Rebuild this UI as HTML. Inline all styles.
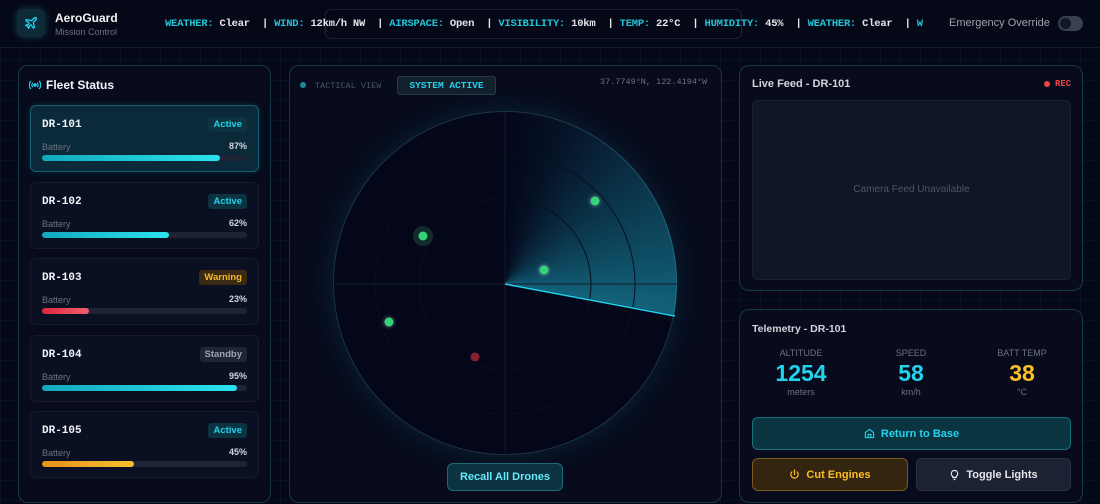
<!DOCTYPE html>
<html><head><style>
*{box-sizing:border-box;margin:0;padding:0}
body{width:1100px;height:504px;overflow:hidden;background:#050816;font-family:"Liberation Sans",sans-serif;color:#e5e7eb;position:relative;
background-image:linear-gradient(rgba(30,60,80,.18) 1px,transparent 1px),linear-gradient(90deg,rgba(30,60,80,.18) 1px,transparent 1px);background-size:20px 20px}
.abs{position:absolute}
.mono{font-family:"Liberation Mono",monospace}
.panel{position:absolute;background:#070b1c;border:1px solid #12394a;border-radius:10px}
.card{position:absolute;left:30px;width:229px;height:67px;border-radius:6px;background:#0b0f22;border:1px solid #161b2e}
.card .id{position:absolute;left:11px;top:13px;font-family:"Liberation Mono",monospace;font-weight:bold;font-size:11px;color:#f1f5f9}
.card .bd{position:absolute;right:11px;top:11px;font-size:9.5px;padding:2px 5px;border-radius:3px;font-weight:bold}
.card .bl{position:absolute;left:11px;top:36px;font-size:9px;color:#6b7280}
.card .pc{position:absolute;right:11px;top:35px;font-size:9px;color:#d1d5db;font-weight:bold}
.card .tr{position:absolute;left:11px;right:11px;top:49px;height:6px;border-radius:3px;background:#1e2335}
.card .fl{height:6px;border-radius:3px}
.act{background:#0d3340;color:#22d3ee}
.cy{background:linear-gradient(90deg,#12a8bd,#2be3ef)}
.stat{position:absolute;text-align:center;width:100px}
.stat .l{font-size:9px;color:#6b7280}
.stat .v{font-size:23px;font-weight:bold;margin-top:2px}
.stat .u{font-size:9px;color:#6b7280}
.btn{position:absolute;border-radius:6px;font-size:11px;font-weight:bold;display:flex;align-items:center;justify-content:center;gap:6px}
</style></head><body>
<!-- header -->
<div class="abs" style="left:0;top:0;width:1100px;height:48px;background:#050816;border-bottom:1px solid #0f1e2c"></div>
<div class="abs" style="left:17px;top:9px;width:28px;height:28px;border-radius:6px;background:#0d2a38;box-shadow:0 0 8px #0e3b4c"></div>
<svg class="abs" style="left:24px;top:16px" width="14" height="14" viewBox="0 0 24 24" fill="none" stroke="#22d3ee" stroke-width="2.2" stroke-linecap="round"><path d="M17.8 19.2 16 11l3.5-3.5C21 6 21.5 4 21 3c-1-.5-3 0-4.5 1.5L13 8 4.8 6.2c-.5-.1-.9.1-1.1.5l-.3.5c-.2.5-.1 1 .3 1.3L9 12l-2 3H4l-1 1 3 2 2 3 1-1v-3l3-2 3.5 5.3c.3.4.8.5 1.3.3l.5-.2c.4-.3.6-.7.5-1.2z"/></svg>
<div class="abs" style="left:55px;top:11px;font-size:12px;font-weight:bold;color:#f3f4f6">AeroGuard</div>
<div class="abs" style="left:55px;top:27px;font-size:9px;color:#6b7280">Mission Control</div>
<div class="abs" style="left:325px;top:9px;width:417px;height:30px;border:1px solid #1a2233;border-radius:6px"></div>
<div class="abs mono" style="left:165px;top:18px;font-size:10.5px;letter-spacing:-0.24px;white-space:nowrap;font-weight:bold;color:#e5e7eb;width:762px;overflow:hidden"><span style="color:#22c3d6">WEATHER:</span> Clear &nbsp;| <span style="color:#22c3d6">WIND:</span> 12km/h NW &nbsp;| <span style="color:#22c3d6">AIRSPACE:</span> Open &nbsp;| <span style="color:#22c3d6">VISIBILITY:</span> 10km &nbsp;| <span style="color:#22c3d6">TEMP:</span> 22°C &nbsp;| <span style="color:#22c3d6">HUMIDITY:</span> 45% &nbsp;| <span style="color:#22c3d6">WEATHER:</span> Clear &nbsp;| <span style="color:#22c3d6">W</span></div>
<div class="abs" style="left:949px;top:17px;font-size:11px;color:#9ca3af">Emergency Override</div>
<div class="abs" style="left:1058px;top:16px;width:25px;height:15px;border-radius:8px;background:#374151"><div style="position:absolute;left:2px;top:2px;width:11px;height:11px;border-radius:50%;background:#111827"></div></div>

<!-- left panel -->
<div class="panel" style="left:18px;top:65px;width:253px;height:438px"></div>
<svg class="abs" style="left:29px;top:80px" width="12" height="10" viewBox="0 0 12 10" fill="none" stroke="#22d3ee" stroke-width="1.2"><circle cx="6" cy="5" r="1.2" fill="#22d3ee"/><path d="M3.8 2.8a3 3 0 0 0 0 4.4M8.2 2.8a3 3 0 0 1 0 4.4M2 1a5.5 5.5 0 0 0 0 8M10 1a5.5 5.5 0 0 1 0 8"/></svg>
<div class="abs" style="left:46px;top:78px;font-size:12px;font-weight:bold;color:#f3f4f6">Fleet Status</div>

<div class="card" style="top:105px;background:#0a2a3a;border-color:#156070;box-shadow:0 0 8px rgba(34,211,238,.15)"><div class="id">DR-101</div><div class="bd act">Active</div><div class="bl">Battery</div><div class="pc">87%</div><div class="tr"><div class="fl cy" style="width:87%"></div></div></div>
<div class="card" style="top:182px"><div class="id">DR-102</div><div class="bd act">Active</div><div class="bl">Battery</div><div class="pc">62%</div><div class="tr"><div class="fl cy" style="width:62%"></div></div></div>
<div class="card" style="top:258px"><div class="id">DR-103</div><div class="bd" style="background:#3a2a14;color:#f5b82a">Warning</div><div class="bl">Battery</div><div class="pc">23%</div><div class="tr"><div class="fl" style="width:23%;background:linear-gradient(90deg,#dc2640,#f0606c)"></div></div></div>
<div class="card" style="top:335px"><div class="id">DR-104</div><div class="bd" style="background:#1f2535;color:#9ca3af">Standby</div><div class="bl">Battery</div><div class="pc">95%</div><div class="tr"><div class="fl cy" style="width:95%"></div></div></div>
<div class="card" style="top:411px"><div class="id">DR-105</div><div class="bd act">Active</div><div class="bl">Battery</div><div class="pc">45%</div><div class="tr"><div class="fl" style="width:45%;background:linear-gradient(90deg,#e8921a,#f5c030)"></div></div></div>

<!-- middle panel -->
<div class="panel" style="left:289px;top:65px;width:433px;height:438px"></div>
<div class="abs" style="left:300px;top:82px;width:6px;height:6px;border-radius:50%;background:#1a8a9a"></div>
<div class="abs mono" style="left:315px;top:81px;font-size:8.5px;color:#4b5563">TACTICAL VIEW</div>
<div class="abs mono" style="left:397px;top:76px;width:99px;height:19px;border:1px solid #2a3a4c;background:#13202e;border-radius:3px;font-size:9.5px;font-weight:bold;color:#22d3ee;text-align:center;line-height:17px">SYSTEM ACTIVE</div>
<div class="abs mono" style="left:600px;top:77px;font-size:8.5px;color:#6b7280">37.7749°N, 122.4194°W</div>
<div class="abs" style="left:333px;top:111px;width:344px;height:344px;border-radius:50%;background:#04061a;border:1px solid #1c3444;box-shadow:0 0 30px rgba(34,211,238,.12)"></div>
<div class="abs" style="left:333px;top:111px;width:344px;height:344px;border-radius:50%;background:conic-gradient(from 0deg,transparent 0deg,rgba(34,211,238,.06) 20deg,rgba(34,211,238,.45) 100.5deg,transparent 100.8deg)"></div>
<svg class="abs" style="left:289px;top:65px" width="433" height="438">
<defs>
<radialGradient id="glow"><stop offset="0" stop-color="#ffffff" stop-opacity=".35"/><stop offset="1" stop-color="#ffffff" stop-opacity="0"/></radialGradient>
</defs>
<circle cx="216" cy="219" r="130" fill="none" stroke="#080f1e"/>
<circle cx="216" cy="219" r="86" fill="none" stroke="#080f1e"/>
<line x1="44" y1="219" x2="388" y2="219" stroke="#111c2c"/>
<line x1="216" y1="47" x2="216" y2="391" stroke="#111c2c"/>
<path d="M216 219 L386 251" stroke="#22d3ee" stroke-width="1.5"/>
<circle cx="306" cy="136" r="8" fill="url(#glow)"/><circle cx="306" cy="136" r="4.5" fill="#34d37a"/>
<circle cx="134" cy="171" r="10" fill="#1a3a30" opacity=".7"/><circle cx="134" cy="171" r="4.5" fill="#34d37a"/>
<circle cx="255" cy="205" r="8" fill="url(#glow)"/><circle cx="255" cy="205" r="4.5" fill="#34d37a"/>
<circle cx="100" cy="257" r="8" fill="url(#glow)"/><circle cx="100" cy="257" r="4.5" fill="#34d37a"/>
<circle cx="186" cy="292" r="4.5" fill="#8a1f30"/>
</svg>
<div class="btn" style="left:447px;top:463px;width:116px;height:28px;background:#0c3340;border:1px solid #1a6a78;color:#67e8f9">Recall All Drones</div>

<!-- right top -->
<div class="panel" style="left:739px;top:65px;width:344px;height:226px"></div>
<div class="abs" style="left:752px;top:78px;font-size:11px;font-weight:bold;color:#d1d5db">Live Feed - DR-101</div>
<div class="abs" style="left:1044px;top:81px;width:6px;height:6px;border-radius:50%;background:#ef4444"></div>
<div class="abs mono" style="left:1055px;top:79px;font-size:9px;color:#ef4444;font-weight:bold">REC</div>
<div class="abs" style="left:752px;top:100px;width:319px;height:180px;background:#111627;border:1px solid #1a2030;border-radius:6px;text-align:center;line-height:178px;font-size:10px;color:#4b5563">Camera Feed Unavailable</div>

<!-- right bottom -->
<div class="panel" style="left:739px;top:309px;width:344px;height:194px"></div>
<div class="abs" style="left:752px;top:323px;font-size:10.5px;font-weight:bold;color:#d1d5db">Telemetry - DR-101</div>
<div class="stat" style="left:751px;top:348px"><div class="l">ALTITUDE</div><div class="v" style="color:#22d3ee">1254</div><div class="u">meters</div></div>
<div class="stat" style="left:861px;top:348px"><div class="l">SPEED</div><div class="v" style="color:#22d3ee">58</div><div class="u">km/h</div></div>
<div class="stat" style="left:972px;top:348px"><div class="l">BATT TEMP</div><div class="v" style="color:#fbbf24">38</div><div class="u">°C</div></div>
<div class="btn" style="left:752px;top:417px;width:319px;height:33px;background:#0a3440;border:1px solid #17707e;color:#22d3ee"><svg width="11" height="11" viewBox="0 0 24 24" fill="none" stroke="#22d3ee" stroke-width="2.4"><path d="M3 10l9-7 9 7v11H3z M9 21v-7h6v7"/></svg>Return to Base</div>
<div class="btn" style="left:752px;top:458px;width:156px;height:33px;background:#33250f;border:1px solid #7a5a18;color:#fbbf24"><svg width="11" height="11" viewBox="0 0 24 24" fill="none" stroke="#fbbf24" stroke-width="2.6" stroke-linecap="round"><path d="M12 2v10M6.3 6.3a8 8 0 1 0 11.4 0"/></svg>Cut Engines</div>
<div class="btn" style="left:916px;top:458px;width:155px;height:33px;background:#1c2234;border:1px solid #2a3144;color:#e5e7eb"><svg width="11" height="12" viewBox="0 0 24 24" fill="none" stroke="#e5e7eb" stroke-width="2.4"><path d="M9 18h6M10 22h4M12 2a7 7 0 0 0-4 12.7V17h8v-2.3A7 7 0 0 0 12 2z"/></svg>Toggle Lights</div>
</body></html>
